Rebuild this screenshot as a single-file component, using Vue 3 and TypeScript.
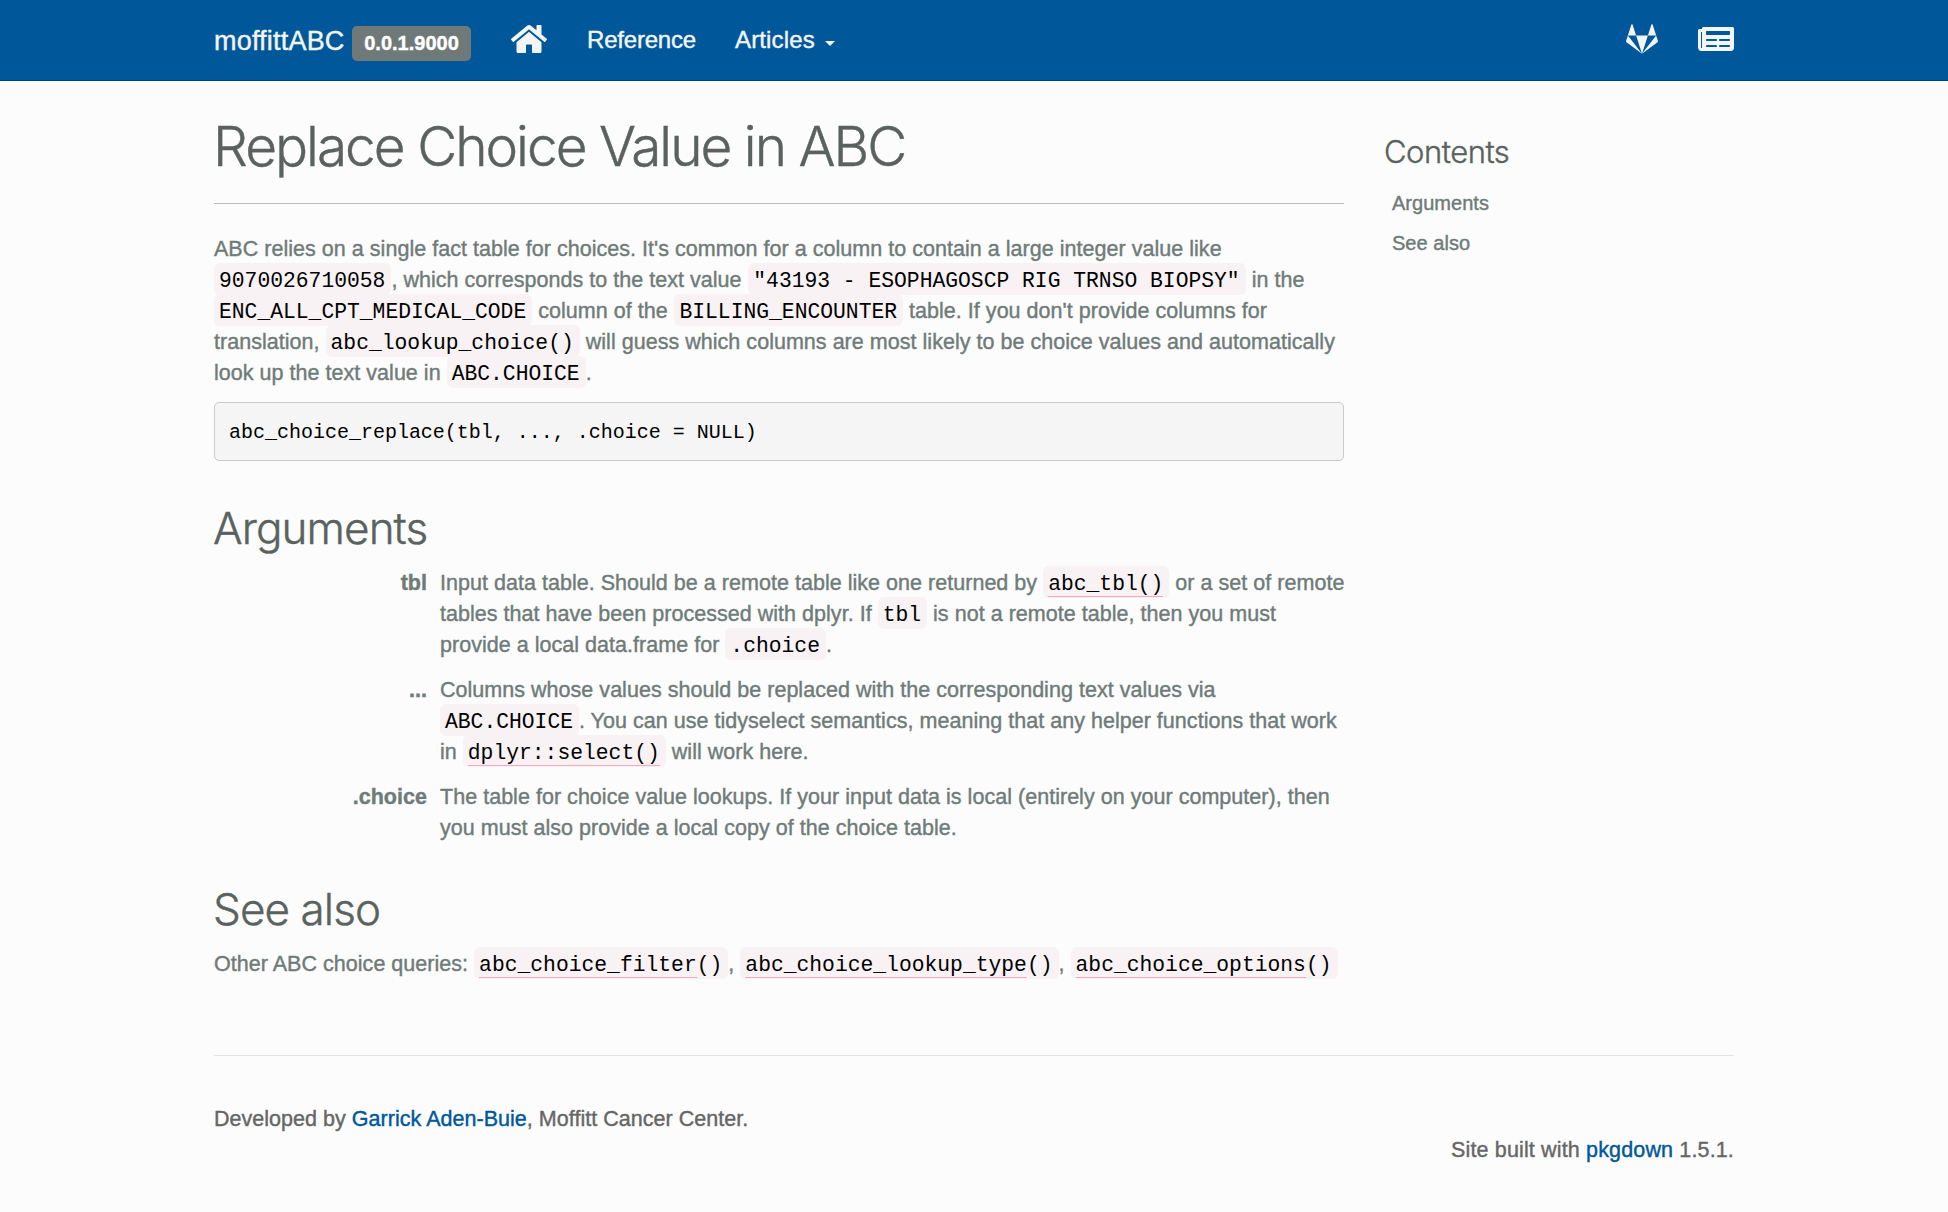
<script setup lang="ts">
interface TocEntry {
  label: string
}

const toc: TocEntry[] = [{ label: 'Arguments' }, { label: 'See also' }]
</script>

<template>
  <div class="page">
    <header class="navbar">
      <nav class="container nav-inner">
        <a class="brand">moffittABC</a>
        <span class="version">0.0.1.9000</span>
        <a class="home">
          <svg width="36" height="32" viewBox="0 0 576 512" fill="currentColor">
            <path d="M488 312.7V456c0 13.3-10.7 24-24 24H348c-6.6 0-12-5.4-12-12V356c0-6.6-5.4-12-12-12h-72c-6.6 0-12 5.4-12 12v112c0 6.6-5.4 12-12 12H112c-13.3 0-24-10.7-24-24V312.7c0-3.6 1.6-7 4.4-9.3l188-154.8c4.4-3.6 10.8-3.6 15.3 0l188 154.8c2.7 2.3 4.3 5.7 4.3 9.3zm83.6-60.9L488 182.9V44.4c0-6.6-5.4-12-12-12h-56c-6.6 0-12 5.4-12 12V117l-89.5-73.7c-17.7-14.6-43.3-14.6-61 0L4.4 251.8c-5.1 4.2-5.8 11.8-1.6 16.9l25.5 31c4.2 5.1 11.8 5.8 16.9 1.6l235.2-193.7c4.4-3.6 10.8-3.6 15.3 0l235.2 193.7c5.1 4.2 12.7 3.5 16.9-1.6l25.5-31c4.2-5.2 3.4-12.7-1.7-16.9z" />
          </svg>
        </a>
        <a class="nav-link reference">Reference</a>
        <a class="nav-link articles">Articles<span class="caret"></span></a>
        <a class="gitlab">
          <svg width="32" height="32" viewBox="0 0 512 512" fill="currentColor">
            <path d="M105.2 24.9c-3.1-8.9-15.7-8.9-18.9 0L29.8 199.7h132c-.1 0-56.6-174.8-56.6-174.8zM.9 287.7c-2.6 8 .3 16.9 7.1 22l247.9 184-226.2-294zm160.8-88l94.3 294 94.3-294zm349.4 88l-28.8-88-226.3 294 247.9-184c6.9-5.1 9.7-14 7.2-22zM425.7 24.9c-3.1-8.9-15.7-8.9-18.9 0l-56.6 174.8h132z" />
          </svg>
        </a>
        <a class="news">
          <svg width="36" height="32" viewBox="0 0 576 512" fill="currentColor">
            <path d="M552 64H88c-13.255 0-24 10.745-24 24v8H24c-13.255 0-24 10.745-24 24v272c0 30.928 25.072 56 56 56h472c26.51 0 48-21.49 48-48V88c0-13.255-10.745-24-24-24zM56 400a8 8 0 0 1-8-8V144h16v248a8 8 0 0 1-8 8zm236-16H140c-6.627 0-12-5.373-12-12v-8c0-6.627 5.373-12 12-12h152c6.627 0 12 5.373 12 12v8c0 6.627-5.373 12-12 12zm208 0H348c-6.627 0-12-5.373-12-12v-8c0-6.627 5.373-12 12-12h152c6.627 0 12 5.373 12 12v8c0 6.627-5.373 12-12 12zm-208-96H140c-6.627 0-12-5.373-12-12v-8c0-6.627 5.373-12 12-12h152c6.627 0 12 5.373 12 12v8c0 6.627-5.373 12-12 12zm208 0H348c-6.627 0-12-5.373-12-12v-8c0-6.627 5.373-12 12-12h152c6.627 0 12 5.373 12 12v8c0 6.627-5.373 12-12 12zm0-96H140c-6.627 0-12-5.373-12-12v-40c0-6.627 5.373-12 12-12h360c6.627 0 12 5.373 12 12v40c0 6.627-5.373 12-12 12z" />
          </svg>
        </a>
      </nav>
    </header>

    <div class="container columns">
      <main class="content">
        <h1>Replace Choice Value in ABC</h1>
        <p class="intro">
          ABC relies on a single fact table for choices. It's common for a column to contain a large integer value like<br />
          <code>9070026710058</code>, which corresponds to the text value <code>"43193 - ESOPHAGOSCP RIG TRNSO BIOPSY"</code> in the<br />
          <code>ENC_ALL_CPT_MEDICAL_CODE</code> column of the <code>BILLING_ENCOUNTER</code> table. If you don't provide columns for<br />
          translation, <code>abc_lookup_choice()</code> will guess which columns are most likely to be choice values and automatically<br />
          look up the text value in <code>ABC.CHOICE</code>.
        </p>
        <pre>abc_choice_replace(tbl, ..., .choice = NULL)</pre>

        <h2>Arguments</h2>
        <dl>
          <dt>tbl</dt>
          <dd>
            Input data table. Should be a remote table like one returned by <code><a>abc_tbl()</a></code> or a set of remote<br />
            tables that have been processed with dplyr. If <code>tbl</code> is not a remote table, then you must<br />
            provide a local data.frame for <code>.choice</code>.
          </dd>
          <dt>...</dt>
          <dd>
            Columns whose values should be replaced with the corresponding text values via<br />
            <code>ABC.CHOICE</code>. You can use tidyselect semantics, meaning that any helper functions that work<br />
            in <code><a>dplyr::select()</a></code> will work here.
          </dd>
          <dt>.choice</dt>
          <dd>
            The table for choice value lookups. If your input data is local (entirely on your computer), then<br />
            you must also provide a local copy of the choice table.
          </dd>
        </dl>

        <h2>See also</h2>
        <p class="queries">
          Other ABC choice queries: <code><a>abc_choice_filter</a>()</code>, <code><a>abc_choice_lookup_type</a>()</code>, <code><a>abc_choice_options</a>()</code>
        </p>
      </main>

      <aside class="sidebar">
        <h3>Contents</h3>
        <ul>
          <li v-for="entry in toc" :key="entry.label">{{ entry.label }}</li>
        </ul>
      </aside>
    </div>

    <footer class="container footer">
      <p>Developed by <a>Garrick Aden-Buie</a>, Moffitt Cancer Center.</p>
      <p class="built">Site built with <a>pkgdown</a> 1.5.1.</p>
    </footer>
  </div>
</template>

<style>
body {
  margin: 0;
  background: #fcfcfc;
}
</style>

<style scoped>
.page {
  min-height: 1212px;
  background: #fcfcfc;
  color: #6f7b79;
  font: 21.5px/31px "Liberation Sans", Arial, sans-serif;
  letter-spacing: 0.03px;
  white-space: nowrap;
  -webkit-text-stroke: 0.4px currentColor;
}
.container {
  width: 1520px;
  margin: 0 auto;
}
.navbar {
  height: 80px;
  background: #00589b;
  border-bottom: 1px solid #003e6d;
  color: #f3f5f5;
}
.nav-inner {
  display: flex;
  align-items: flex-start;
}
.brand {
  width: 138px;
  margin-top: 26px;
  font-size: 27px;
  letter-spacing: 0.2px;
}
.version {
  box-sizing: border-box;
  width: 119px;
  height: 35px;
  margin-top: 26px;
  border-radius: 5px;
  background: #6f7978;
  color: #fff;
  font-size: 20px;
  font-weight: 700;
  line-height: 34px;
  letter-spacing: 0;
  text-align: center;
}
.home {
  width: 36px;
  margin: 23px 40px 0 40px;
}
.home svg,
.gitlab svg,
.news svg {
  display: block;
}
.nav-link {
  margin-top: 24px;
  font-size: 24px;
  letter-spacing: -0.2px;
}
.reference {
  width: 148px;
}
.articles {
  display: flex;
  letter-spacing: 0.15px;
}
.caret {
  margin: 17px 0 0 10px;
  width: 0;
  height: 0;
  border-top: 5px solid currentColor;
  border-left: 5px solid transparent;
  border-right: 5px solid transparent;
}
.gitlab {
  margin: 23px 40px 0 auto;
}
.news {
  margin-top: 23px;
}
.columns {
  display: flex;
  gap: 40px;
}
.content {
  width: 1130px;
}
h1,
h2,
h3 {
  margin: 0;
  color: #5a6260;
  font-family: Inter, "Liberation Sans", sans-serif;
  font-weight: 300;
}
h1 {
  height: 88px;
  padding-top: 34px;
  border-bottom: 1px solid #bcbcbc;
  font-size: 55px;
  line-height: 62px;
  letter-spacing: -2.02px;
  text-indent: -1px;
}
.intro {
  margin: 30px 0 13px;
}
code {
  padding: 6px 6px 2px 5px;
  border-radius: 6px;
  background: #f8f2f4;
  color: #000;
  font-family: "Liberation Mono", monospace;
  font-size: 21.33px;
  line-height: 1;
  letter-spacing: 0;
  -webkit-text-stroke: 0;
}
.intro code {
  margin-left: 0.8px;
}
.intro br + code {
  margin-left: 0;
}
code a {
  border-bottom: 1px solid #f7a6bf;
}
pre {
  box-sizing: border-box;
  height: 59px;
  margin: 0 0 42px;
  padding: 15px 14px 13px;
  border: 1px solid #c9cacb;
  border-radius: 5px;
  background: #f5f5f5;
  color: #000;
  font: 20px/29px "Liberation Mono", monospace;
  letter-spacing: -0.01px;
  -webkit-text-stroke: 0;
}
h2 {
  font-size: 44px;
  line-height: 50px;
  letter-spacing: -0.9px;
  text-indent: -1px;
}
dl {
  display: grid;
  grid-template-columns: 213px 1fr;
  column-gap: 13px;
  row-gap: 14px;
  margin: 15px 0 40px;
}
dt {
  font-weight: 700;
  text-align: right;
}
dd {
  margin: 0;
}
.queries {
  margin: 15px 0 0;
}
h3 {
  margin-top: 51px;
  font-size: 31px;
  line-height: 40px;
  letter-spacing: -0.5px;
}
ul {
  margin: 11px 0 0;
  padding: 0 0 0 8px;
  list-style: none;
  font-size: 20px;
  line-height: 40px;
}
.footer {
  margin-top: 75px;
  padding-top: 48px;
  border-top: 1px solid #e3e4e4;
  color: #666;
}
.footer p {
  margin: 0;
}
.footer a {
  color: #00589b;
}
.built {
  text-align: right;
  letter-spacing: 0.15px;
}
</style>
